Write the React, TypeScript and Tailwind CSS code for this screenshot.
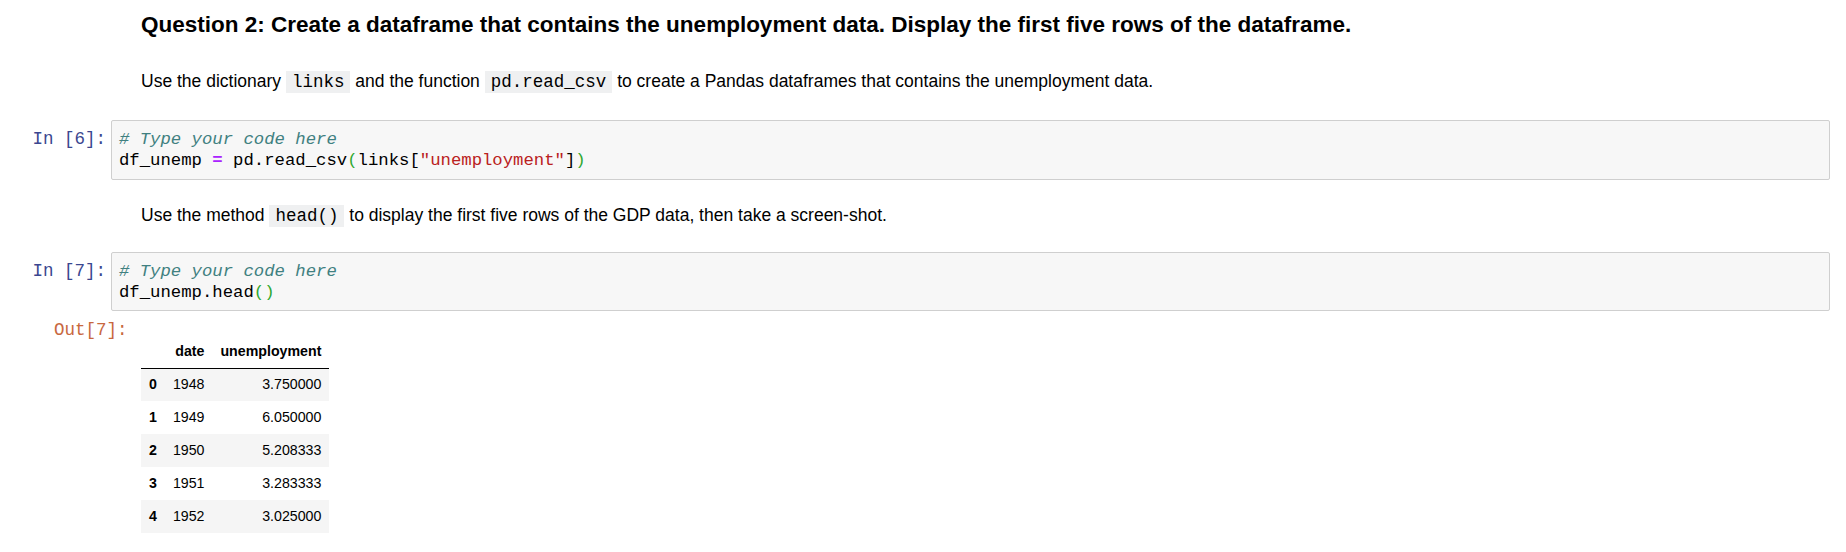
import React from "react";

const sans = "font-['Liberation_Sans',Arial,sans-serif]";
const mono = "font-['Liberation_Mono','Courier_New',monospace]";

function InlineCode({ children }: { children: React.ReactNode }) {
  return (
    <code className={`${mono} bg-[#eff0f1] px-[6px] py-[1px] text-[17.5px]`}>
      {children}
    </code>
  );
}

function CodeCell({ n, children }: { n: number; children: React.ReactNode }) {
  return (
    <div className="flex items-start mr-[16px]">
      <div
        className={`${mono} w-[111px] shrink-0 pr-[5px] pt-[9px] text-right text-[17.5px] leading-[21.25px] text-[#3b4790] whitespace-pre`}
      >
        In [{n}]:
      </div>
      <div
        className={`${mono} flex-1 border border-[#cfcfcf] rounded-[2px] bg-[#f7f7f7] pl-[7px] pt-2 pb-[7px] text-[17.3px] leading-[21.25px] text-black whitespace-pre`}
      >
        {children}
      </div>
    </div>
  );
}

const Comment = () => (
  <div className="italic text-[#408080]"># Type your code here</div>
);

const rows = [
  ["0", "1948", "3.750000"],
  ["1", "1949", "6.050000"],
  ["2", "1950", "5.208333"],
  ["3", "1951", "3.283333"],
  ["4", "1952", "3.025000"],
];

export default function App() {
  return (
    <div className={`${sans} bg-white text-black w-[1846px] h-[552px] overflow-hidden`}>
      <h3 className="ml-[141px] mt-[12px] text-[22.5px] leading-[25px] font-bold">
        Question 2: Create a dataframe that contains the unemployment data. Display the first five rows of the dataframe.
      </h3>

      <p className="ml-[141px] mt-[32px] text-[17.5px] leading-[25px]">
        Use the dictionary <InlineCode>links</InlineCode> and the function{" "}
        <InlineCode>pd.read_csv</InlineCode> to create a Pandas dataframes that contains the
        unemployment data.
      </p>

      <div className="mt-[25px]">
        <CodeCell n={6}>
          <Comment />
          <div>
            df_unemp <span className="font-bold text-[#aa22ff]">=</span> pd.read_csv
            <span className="text-[#2fa82f]">(</span>links[
            <span className="text-[#ba2121]">"unemployment"</span>]
            <span className="text-[#2fa82f]">)</span>
          </div>
        </CodeCell>
      </div>

      <p className="ml-[141px] mt-[23px] text-[17.5px] leading-[25px]">
        Use the method <InlineCode>head()</InlineCode> to display the first five rows of the GDP
        data, then take a screen-shot.
      </p>

      <div className="mt-[23px]">
        <CodeCell n={7}>
          <Comment />
          <div>
            df_unemp.head<span className="text-[#2fa82f]">()</span>
          </div>
        </CodeCell>
      </div>

      <div className="mt-[9px] flex items-start">
        <div
          className={`${mono} w-[141px] shrink-0 pl-[54px] text-[17.5px] leading-[21.25px] text-[#c8683f] whitespace-pre`}
        >
          Out[7]:
        </div>
        <div className="pt-[15px]">
          <table className="border-collapse text-[14.2px] text-black">
            <thead className="border-b border-black">
              <tr className="h-[33px]">
                <th className="px-2"></th>
                <th className="px-2 text-right font-bold">date</th>
                <th className="px-2 text-right font-bold">unemployment</th>
              </tr>
            </thead>
            <tbody>
              {rows.map((r, i) => (
                <tr key={r[0]} className={`h-[33px] ${i % 2 === 0 ? "bg-[#f5f5f5]" : "bg-white"}`}>
                  <th className="px-2 text-right font-bold">{r[0]}</th>
                  <td className="px-2 text-right">{r[1]}</td>
                  <td className="px-2 text-right">{r[2]}</td>
                </tr>
              ))}
            </tbody>
          </table>
        </div>
      </div>
    </div>
  );
}
